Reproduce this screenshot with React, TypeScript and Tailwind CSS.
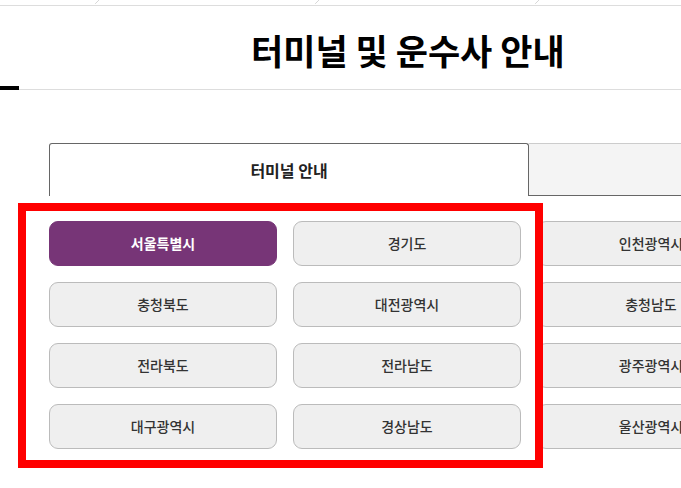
import React from "react";

const regions = [
  "서울특별시", "경기도", "인천광역시", "강원도",
  "충청북도", "대전광역시", "충청남도", "세종특별자치시",
  "전라북도", "전라남도", "광주광역시", "경상북도",
  "대구광역시", "경상남도", "울산광역시", "부산광역시",
];

function Slash() {
  return (
    <span className="block w-[220px] shrink-0">
      <svg width="5" height="5" viewBox="0 0 5 5" className="block">
        <line x1="4" y1="0" x2="0" y2="4" stroke="#c8c8c8" strokeWidth="1" strokeDasharray="1 0.6" />
      </svg>
    </span>
  );
}

export default function App() {
  const [active, setActive] = React.useState(0);

  return (
    <div
      className="relative w-[681px] h-[488px] overflow-hidden bg-white"
      style={{ fontFamily: '"Noto Sans CJK KR", "Noto Sans", sans-serif' }}
    >
      {/* breadcrumb strip */}
      <div className="flex h-[6px] border-b border-[#dddddd] pl-[95px]">
        <Slash />
        <Slash />
        <Slash />
      </div>

      {/* page title */}
      <div className="relative h-[84px] border-b border-[#dddddd] flex items-center pl-[251px] pt-[4px]">
        <h1 className="text-[35px] leading-[35px] font-bold text-black whitespace-nowrap">
          터미널 및 운수사 안내
        </h1>
        <span className="absolute left-0 bottom-[-1px] w-[19px] h-[4px] bg-black" />
      </div>

      <div className="pl-[49px] pt-[53px] w-[1100px]">
        {/* tabs */}
        <div className="flex h-[53px]">
          <div className="w-[480px] border border-b-0 border-[#666666] rounded-t-[3px] flex items-center justify-center text-[16px] font-bold text-[#222222]">
            터미널 안내
          </div>
          <div className="w-[480px] bg-[#f4f4f4] border-t border-t-[#cccccc] border-b border-b-[#666666] border-r border-r-[#cccccc] flex items-center justify-center text-[16px] text-[#555555]">
            운수사 안내
          </div>
        </div>

        {/* region buttons */}
        <div className="mt-[25px] grid grid-cols-[repeat(4,228px)] gap-x-[16px] gap-y-[16px]">
          {regions.map((name, i) => (
            <button
              key={name}
              onClick={() => setActive(i)}
              className={
                i === active
                  ? "h-[45px] rounded-[9px] border border-[#773577] bg-[#773577] text-white text-[14px] font-bold"
                  : "h-[45px] rounded-[9px] border border-[#bbbbbb] bg-[#efefef] text-[#333333] text-[14px] font-medium"
              }
            >
              {name}
            </button>
          ))}
        </div>
      </div>

      {/* highlight frame */}
      <div className="absolute left-[18px] top-[203px] w-[525px] h-[265px] border-[8px] border-[#ff0000] pointer-events-none" />
    </div>
  );
}
